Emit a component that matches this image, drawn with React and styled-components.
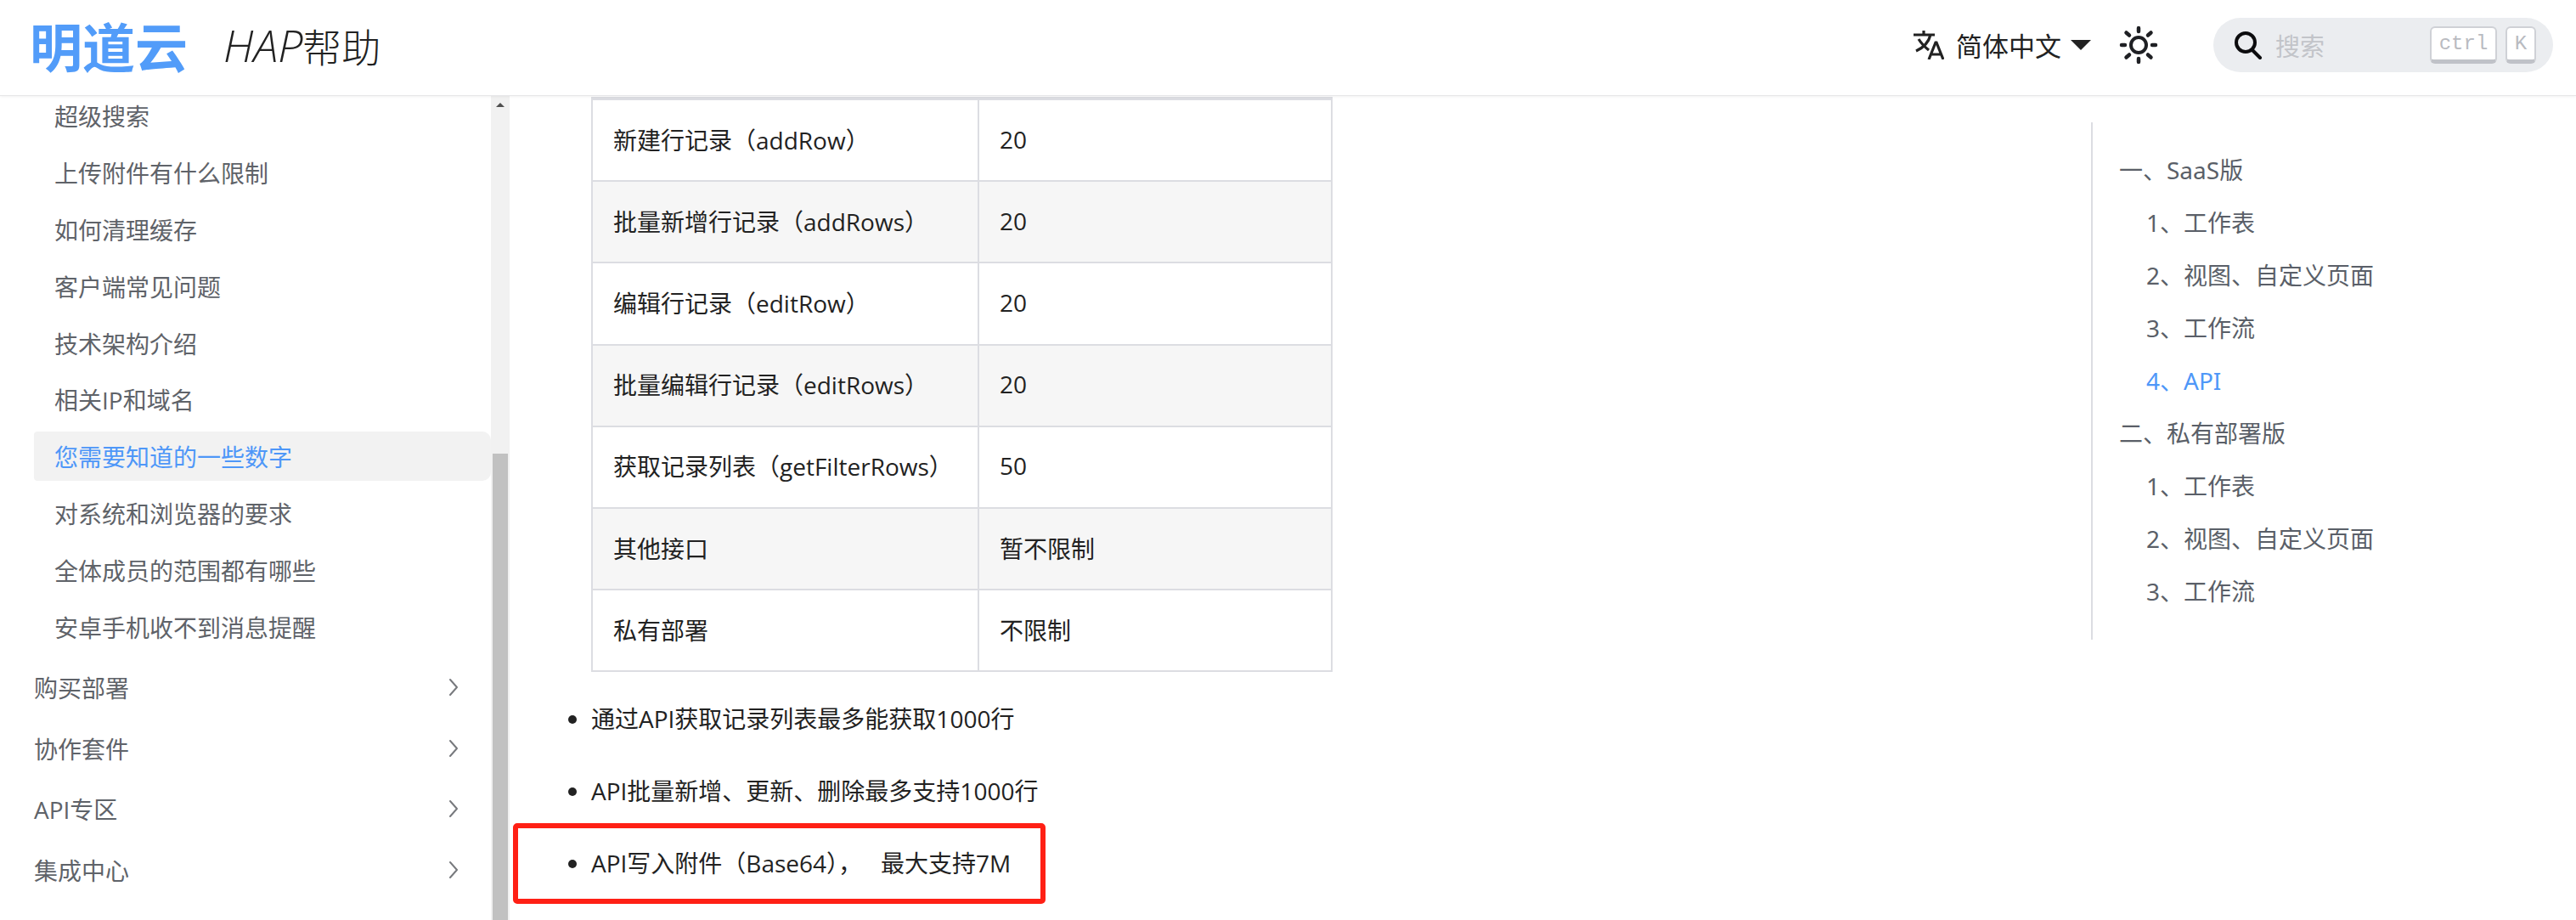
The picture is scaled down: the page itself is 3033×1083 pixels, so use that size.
import React from 'react'
import styled, {createGlobalStyle} from 'styled-components'

const cjk = '"Open Sans", "Noto Sans CJK SC", sans-serif'

const GlobalStyle = createGlobalStyle`
    html, body {
        margin: 0;
        padding: 0;
        background: #fff;
    }
    * {
        box-sizing: border-box;
    }
`

const Page = styled.div`
    width: 3033px;
    height: 1083px;
    overflow: hidden;
    display: flex;
    flex-direction: column;
    font-family: ${cjk};
    background: #fff;
`

const Header = styled.header`
    height: 113px;
    flex: none;
    display: flex;
    align-items: center;
    padding-bottom: 7px;
    background: #fff;
    border-bottom: 1px solid #e6e6e8;
    box-shadow: 0 1px 3px rgba(0, 0, 0, 0.06);
    position: relative;
    z-index: 2;
`

const Logo = styled.div`
    margin-left: 35px;
    width: 186px;
    font-size: 62px;
    line-height: 62px;
    font-weight: 700;
    color: #529cf9;
    font-family: "Noto Sans CJK SC", sans-serif;
    white-space: nowrap;
`

const Title = styled.div`
    margin-left: 42px;
    font-size: 46px;
    line-height: 60px;
    font-weight: 300;
    color: #222;
    font-family: "Noto Sans CJK SC", sans-serif;
    em {
        font-family: "Open Sans", sans-serif;
        font-size: 52px;
        font-weight: 300;
        font-style: italic;
    }
`

const Tools = styled.div`
    margin-left: auto;
    display: flex;
    align-items: center;
`

const Lang = styled.div`
    display: flex;
    align-items: center;
    font-size: 31px;
    color: #222;
    font-family: "Noto Sans CJK SC", sans-serif;
    svg.translate {
        margin-right: 14px;
    }
    svg.caret {
        margin-left: 11px;
    }
`

const ThemeIcon = styled.svg`
    margin-left: 33px;
    width: 46px;
    height: 46px;
`

const SearchBox = styled.div`
    margin-left: 65px;
    margin-right: 27px;
    width: 400px;
    height: 64px;
    border-radius: 32px;
    background: #ebedf0;
    display: flex;
    align-items: center;
    padding: 0 20px 0 24px;
`

const Placeholder = styled.span`
    margin-left: 15px;
    font-size: 29px;
    color: #c2c4c9;
    font-family: "Noto Sans CJK SC", sans-serif;
`

const Key = styled.kbd`
    height: 44px;
    width: ${p => p.$w}px;
    margin-left: ${p => p.$ml};
    background: #fff;
    border: 2px solid #cfd1d6;
    border-bottom: 5px solid #c0c2c8;
    border-radius: 6px;
    display: flex;
    align-items: center;
    justify-content: center;
    font-family: "Liberation Mono", monospace;
    font-size: 24px;
    color: #b9bbc1;
`

const Body = styled.div`
    flex: 1;
    min-height: 0;
    display: flex;
`

const Sidebar = styled.nav`
    width: 600px;
    flex: none;
    display: flex;
    overflow: hidden;
`

const NavList = styled.div`
    width: 578px;
    flex: none;
    margin-top: -6px;
    display: flex;
    flex-direction: column;
`

const NavItem = styled.div`
    height: 58px;
    margin: 0 0 8.9px 40px;
    padding-left: 24px;
    display: flex;
    align-items: center;
    font-size: 28px;
    border-radius: 4px 10px 10px 4px;
    color: ${p => (p.$active ? '#4e97f8' : '#5f6369')};
    background: ${p => (p.$active ? '#f2f2f2' : 'transparent')};
    white-space: nowrap;
`

const NavGroup = styled.div`
    height: 71.8px;
    padding: 0 38px 0 40px;
    display: flex;
    align-items: center;
    justify-content: space-between;
    font-size: 28px;
    color: #5f6369;
    white-space: nowrap;
`

const GroupGap = styled.div`
    margin-top: -3px;
    display: flex;
    flex-direction: column;
`

const Track = styled.div`
    width: 22px;
    flex: none;
    background: #f1f1f1;
    display: flex;
    flex-direction: column;
    align-items: center;
`

const Arrow = styled.div`
    margin-top: 8px;
    width: 0;
    height: 0;
    border-left: 5px solid transparent;
    border-right: 5px solid transparent;
    border-bottom: 5px solid #505050;
`

const Thumb = styled.div`
    margin-top: 408px;
    flex: 1;
    width: 18px;
    background: #c1c1c1;
`

const Main = styled.main`
    flex: 1;
    min-width: 0;
    display: flex;
    overflow: hidden;
`

const Content = styled.div`
    width: 1000px;
    flex: none;
    padding: 1px 0 0 96px;
`

const Table = styled.table`
    border-collapse: collapse;
    width: 873px;
    table-layout: fixed;
    font-size: 28px;
    color: #222;
`

const Row = styled.tr`
    height: 96.2px;
    background: ${p => (p.$alt ? '#f6f6f6' : '#fff')};
`

const Cell = styled.td`
    border: 2px solid #dcdde2;
    padding: 0 24px 3px;
    width: ${p => p.$w};
    white-space: nowrap;
`

const EdgeCell = styled.td`
    border: 2px solid #dcdde2;
    height: 2px;
    padding: 0;
    width: ${p => p.$w};
`

const Notes = styled.ul`
    margin: 34px 0 0;
    padding: 0;
    list-style: disc;
    font-size: 28px;
    line-height: 42px;
    color: #222;
`

const Note = styled.li`
    position: relative;
    margin-bottom: 43px;
    white-space: nowrap;
`

const Highlight = styled.div`
    position: absolute;
    left: -92px;
    top: -26px;
    width: 627px;
    height: 95px;
    border: 6px solid #ff2015;
    border-radius: 5px;
`

const Toc = styled.aside`
    margin: 31px 0 0 862px;
    width: 571px;
    height: 609px;
    flex: none;
    border-left: 2px solid #dcdde2;
    padding: 24px 0 0 31px;
`

const TocItem = styled.div`
    height: 62px;
    display: flex;
    align-items: center;
    padding-left: ${p => (p.$sub ? '32px' : '0')};
    font-size: 28px;
    font-family: "Noto Sans", "Noto Sans CJK SC", sans-serif;
    color: ${p => (p.$active ? '#4e97f8' : '#5a5f68')};
    white-space: nowrap;
`

const navItems = ['超级搜索', '上传附件有什么限制', '如何清理缓存', '客户端常见问题', '技术架构介绍', '相关IP和域名', '您需要知道的一些数字', '对系统和浏览器的要求', '全体成员的范围都有哪些', '安卓手机收不到消息提醒']
const navGroups = ['购买部署', '协作套件', 'API专区', '集成中心']
const rows = [
    ['新建行记录（addRow）', '20'],
    ['批量新增行记录（addRows）', '20'],
    ['编辑行记录（editRow）', '20'],
    ['批量编辑行记录（editRows）', '20'],
    ['获取记录列表（getFilterRows）', '50'],
    ['其他接口', '暂不限制'],
    ['私有部署', '不限制'],
]
const toc = [
    ['一、SaaS版'],
    ['1、工作表', 'sub'],
    ['2、视图、自定义页面', 'sub'],
    ['3、工作流', 'sub'],
    ['4、API', 'sub', 'active'],
    ['二、私有部署版'],
    ['1、工作表', 'sub'],
    ['2、视图、自定义页面', 'sub'],
    ['3、工作流', 'sub'],
]

const Chevron = () => (
    <svg width="12" height="22" viewBox="0 0 12 22" fill="none">
        <path d="M2 2 L10 11 L2 20" stroke="#77797d" strokeWidth="2" strokeLinecap="round" strokeLinejoin="round" />
    </svg>
)

const Sun = () => (
    <ThemeIcon viewBox="0 0 46 46" fill="none" stroke="#1f2024" strokeWidth="4.5" strokeLinecap="round">
        <circle cx="23" cy="23" r="9" strokeWidth="4" />
        <path d="M23 3v4M23 39v4M3 23h4M39 23h4M8.5 8.5l3.5 3M37.500 8.500l-3.500 3M8.500 37.500l3.500-3M37.500 37.500l-3.500-3" />
    </ThemeIcon>
)

const TranslateIcon = () => (
    <svg className="translate" width="36" height="34" viewBox="0 0 36 34" fill="none" stroke="#222" strokeWidth="3.200">
        <path d="M0 5h25M12 0v5M20 5c-2 8-8 15-17 19M6 10c3 5 7 9 12 13" />
        <path d="M18 34l8-20h1l8 20M21 28h11" />
    </svg>
)

const SearchIcon = () => (
    <svg width="34" height="34" viewBox="0 0 34 34" fill="none" stroke="#0c0c0e" strokeWidth="4" strokeLinecap="round">
        <circle cx="14" cy="14" r="11" />
        <path d="M22 23l9 9" />
    </svg>
)

const App = () => {
    return (
        <Page>
            <GlobalStyle />
            <Header>
                <Logo>明道云</Logo>
                <Title><em>HAP</em>帮助</Title>
                <Tools>
                    <Lang>
                        <TranslateIcon />
                        简体中文
                        <svg className="caret" width="24" height="12" viewBox="0 0 24 12"><path d="M0 0h24L12 12z" fill="#222" /></svg>
                    </Lang>
                    <Sun />
                    <SearchBox>
                        <SearchIcon />
                        <Placeholder>搜索</Placeholder>
                        <Key $w={79} $ml="auto">ctrl</Key>
                        <Key $w={36} $ml="10px">K</Key>
                    </SearchBox>
                </Tools>
            </Header>
            <Body>
                <Sidebar>
                    <NavList>
                        {navItems.map((t, i) => (
                            <NavItem key={t} $active={i === 6}>{t}</NavItem>
                        ))}
                        <GroupGap>
                            {navGroups.map(t => (
                                <NavGroup key={t}>{t}<Chevron /></NavGroup>
                            ))}
                        </GroupGap>
                    </NavList>
                    <Track>
                        <Arrow />
                        <Thumb />
                    </Track>
                </Sidebar>
                <Main>
                    <Content>
                        <Table>
                            <tbody>
                                <tr>
                                    <EdgeCell $w="455px" />
                                    <EdgeCell />
                                </tr>
                                {rows.map((r, i) => (
                                    <Row key={r[0]} $alt={i % 2 === 1}>
                                        <Cell>{r[0]}</Cell>
                                        <Cell>{r[1]}</Cell>
                                    </Row>
                                ))}
                            </tbody>
                        </Table>
                        <Notes>
                            <Note>通过API获取记录列表最多能获取1000行</Note>
                            <Note>API批量新增、更新、删除最多支持1000行</Note>
                            <Note>
                                API写入附件（Base64），&nbsp;&nbsp; 最大支持7M
                                <Highlight />
                            </Note>
                        </Notes>
                    </Content>
                    <Toc>
                        {toc.map((t, i) => (
                            <TocItem key={i} $sub={t[1] === 'sub'} $active={t[2] === 'active'}>{t[0]}</TocItem>
                        ))}
                    </Toc>
                </Main>
            </Body>
        </Page>
    )
}

export default App
